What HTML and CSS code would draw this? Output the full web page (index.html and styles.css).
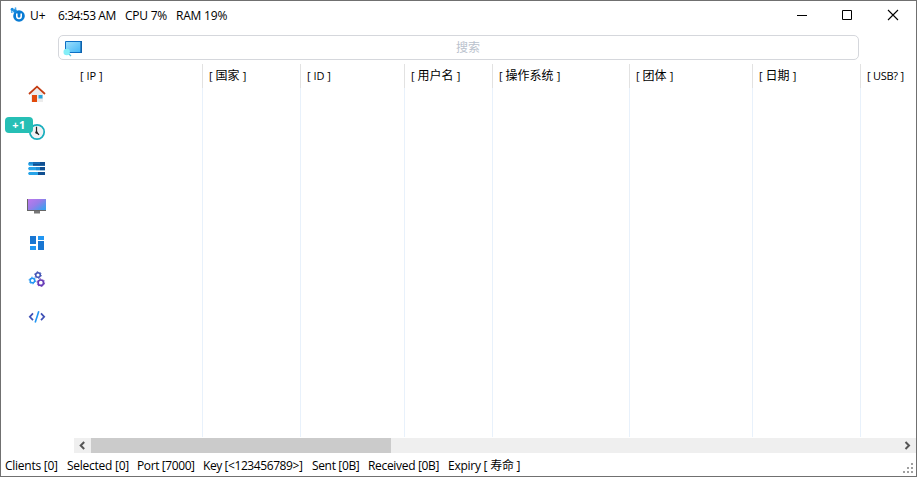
FILE: index.html
```html
<!DOCTYPE html>
<html lang="zh">
<head>
<meta charset="utf-8">
<title>U+</title>
<link rel="stylesheet" href="styles.css">
</head>
<body>
<div class="window">
  <header class="titlebar">
    <svg class="logo" width="16" height="16" viewBox="0 0 16 16"><circle cx="9" cy="9" r="5.8" fill="#087bd4"/><circle cx="2.2" cy="2.4" r="1.6" fill="#168be0"/><circle cx="5" cy="4" r="2" fill="#168be0"/><circle cx="1.8" cy="5" r="1" fill="#48a8ee"/><circle cx="5.5" cy="1.2" r=".9" fill="#48a8ee"/><path d="M6.8 6.5v2.7c0 3 4.4 3 4.4 0V6.5" fill="none" stroke="#fff" stroke-width="1.6"/></svg>
    <div class="stats"><span class="w-u">U+</span><span class="w-time">6:34:53 AM</span><span class="w-cpu">CPU 7%</span><span class="w-ram">RAM 19%</span></div>
    <div class="controls">
      <svg width="12" height="12" viewBox="0 0 12 12"><path d="M2 6.5h10" stroke="#000"/></svg>
      <svg width="12" height="12" viewBox="0 0 12 12"><path d="M1.5 1.5h9v9h-9z" fill="none" stroke="#000"/></svg>
      <svg width="12" height="12" viewBox="0 0 12 12"><path d="M1 1l10 10M11 1L1 11" stroke="#000" stroke-width="1.1"/></svg>
    </div>
  </header>
  <div class="search">
    <svg width="20" height="18" viewBox="0 0 20 18"><defs><linearGradient id="sky" x1="0" y1="0" x2="1" y2="1"><stop stop-color="#a0e0fc"/><stop offset="1" stop-color="#41b5f6"/></linearGradient></defs><path d="M2.5 2.5h16v11h-16z" fill="url(#sky)" stroke="#0d6fc4"/><path d="M18.2 2v12" stroke="#0d62ad" stroke-width="1.6"/><path d="M5 14l3 3" stroke="#55c3df" stroke-width="1.2"/><circle cx="3.7" cy="13" r="3.2" fill="#83eef7"/></svg>
    <span class="placeholder">搜索</span>
  </div>
  <main class="main">
    <nav class="sidebar">
      <div class="item"><svg width="20" height="20" viewBox="0 0 20 20"><path d="M4 9.5L10 4l6 5.5V18H4z" fill="#ececec"/><path d="M5 11h5v7H5z" fill="#e14a0c"/><path d="M11.5 11h4v3.5h-4z" fill="#28a5dc"/><path d="M2 10l8-7.3 8 7.3" fill="none" stroke="#c43c12" stroke-width="1.8"/></svg></div>
      <div class="item"><svg width="20" height="20" viewBox="0 0 20 20"><circle cx="10" cy="10" r="7.2" fill="#f2f2f4" stroke="#18aebd" stroke-width="1.7"/><path d="M9.5 4.8v5.7l2.5 2.3" fill="none" stroke="#222" stroke-width="1.2"/><circle cx="9.5" cy="10.5" r="1.2" fill="#222"/></svg><span class="badge">+1</span></div>
      <div class="item"><svg width="20" height="20" viewBox="0 0 20 20"><path d="M2 3h16v3.7H2l-1-1.7zM2 8h16v3.2H2l-1-1.6zM2 13h16v3H2l-1-1.5z" fill="#28a4e8"/><path d="M6 3h12v3.7H6zM13 8h5v3.2h-5zM11 13h7v3h-7z" fill="#104f91"/><path d="M2 3h11v2H2zM9 8h4v3.2H9z" fill="#1a7fc9" opacity=".6"/></svg></div>
      <div class="item"><svg width="20" height="20" viewBox="0 0 20 20"><defs><linearGradient id="screen" x1="0" y1="0" x2="1" y2=".8"><stop stop-color="#be78ed"/><stop offset=".5" stop-color="#987de9"/><stop offset="1" stop-color="#3ba0ee"/></linearGradient></defs><path d="M0 3h19v12H0z" fill="#666"/><path d="M1 3h18v11H1z" fill="url(#screen)"/><path d="M7 15h6v2H7z" fill="#777"/><path d="M7 17h6v1H7z" fill="#bbb"/></svg></div>
      <div class="item"><svg width="20" height="20" viewBox="0 0 20 20"><path d="M3 3h6v8H3zM11 8h6v9h-6z" fill="#1976d2"/><path d="M3 13h6v4H3zM11 3h6v4h-6z" fill="#2196f3"/></svg></div>
      <div class="item"><svg width="20" height="20" viewBox="0 0 20 20" fill="none"><g stroke="#3f51b5"><circle cx="11" cy="5" r="2.3" stroke-width="1.5"/><circle cx="11" cy="5" r="3.3" stroke-width="1" stroke-dasharray="1.5 1.955"/></g><g stroke="#2196f3"><circle cx="5.4" cy="10.5" r="2.3" stroke-width="1.5"/><circle cx="5.4" cy="10.5" r="3.3" stroke-width="1" stroke-dasharray="1.5 1.955"/></g><g stroke="#673ab7"><circle cx="13.8" cy="12.7" r="2.7" stroke-width="1.7"/><circle cx="13.8" cy="12.7" r="3.8" stroke-width="1" stroke-dasharray="1.8 2.18"/></g></svg></div>
      <div class="item"><svg width="20" height="20" viewBox="0 0 20 20" fill="none"><path d="M6 6.4L2.8 9.8 6 13.2M14 6.4l3.2 3.4-3.2 3.4" stroke="#3f51b5" stroke-width="1.7"/><path d="M11.8 4.2L8.2 15.5" stroke="#2196f3" stroke-width="1.6"/></svg></div>
    </nav>
    <section class="table">
      <div class="columns">
        <div class="col"><div class="head"><span class="h-ip">[ IP ]</span></div></div>
        <div class="col"><div class="head">[<b>国家</b>]</div></div>
        <div class="col"><div class="head"><span class="h-id">[ ID ]</span></div></div>
        <div class="col"><div class="head">[<b>用户名</b>]</div></div>
        <div class="col"><div class="head">[<b>操作系统</b>]</div></div>
        <div class="col"><div class="head">[<b>团体</b>]</div></div>
        <div class="col"><div class="head">[<b>日期</b>]</div></div>
        <div class="col"><div class="head"><span class="h-usb">[ USB? ]</span></div></div>
      </div>
      <div class="scrollbar">
        <svg width="17" height="15" viewBox="0 0 17 15"><path d="M10.2 4L6.7 7.5l3.5 3.5" fill="none" stroke="#555" stroke-width="2"/></svg>
        <div class="thumb"></div>
        <svg class="next" width="17" height="15" viewBox="0 0 17 15"><path d="M6.5 4L10 7.5 6.5 11" fill="none" stroke="#555" stroke-width="2"/></svg>
      </div>
    </section>
  </main>
  <footer class="status">
    <span class="s1">Clients [0]</span><span class="s2">Selected [0]</span><span class="s3">Port [7000]</span><span class="s4">Key [&lt;123456789&gt;]</span><span class="s5">Sent [0B]</span><span class="s6">Received [0B]</span><span class="s7">Expiry [ 寿命 ]</span>
    <svg class="grip" width="10" height="10" viewBox="0 0 10 10"><path d="M8 0h2v2H8zM4 4h2v2H4zM8 4h2v2H8zM0 8h2v2H0zM4 8h2v2H4zM8 8h2v2H8z" fill="#a0a0a0"/></svg>
  </footer>
</div>
</body>
</html>
```
FILE: styles.css
```css
* { box-sizing: border-box; }
body { margin: 0; font: 12px/16px "Open Sans", "Noto Sans CJK SC", sans-serif; color: #000; }
.window { width: 917px; height: 477px; display: flex; flex-direction: column; border: 1px solid #707070; background: #fff; }
svg { display: block; flex: none; }
span { white-space: nowrap; }

.titlebar { height: 34px; flex: none; display: flex; align-items: flex-start; padding: 6px 17px 0 9px; }
.stats { display: flex; margin: 1px 0 0 4px; }
.w-u { width: 28px; }
.w-time { width: 67px; letter-spacing: -.42px; }
.w-cpu { width: 51px; letter-spacing: -.25px; }
.w-ram { letter-spacing: -.2px; }
.controls { display: flex; gap: 34px; margin: 2px 0 0 auto; }

.search { width: 801px; height: 25px; flex: none; margin-left: 57px; display: flex; align-items: center; padding-left: 4px; border: 1px solid #d5d7dc; border-radius: 5px; }
.placeholder { flex: 1; text-align: center; margin-right: 5px; color: #bac2cd; }

.main { height: 394px; flex: none; display: flex; padding-top: 4px; }
.sidebar { width: 73px; padding-top: 12px; flex: none; }
.item { height: 37px; display: flex; align-items: center; padding-left: 26px; position: relative; }
.item:first-child svg { margin-top: -1px; }
.badge { position: absolute; left: 4px; top: 4px; width: 28px; height: 16px; border-radius: 4px; background: #26bfb5; color: #fff; font: bold 11px/16px "Open Sans", sans-serif; text-align: center; letter-spacing: .5px; }

.table { width: 842px; }
.columns { height: 373px; display: grid; grid-template-columns: 129px 98px 104px 88px 137px 123px 108px 55px; }
.col { border-right: 1px solid #e8f1fb; }
.col:last-child { border-right: 0; }
.head { height: 24px; margin-right: -1px; border-right: 1px solid #e2e2e2; padding-left: 6px; display: flex; align-items: center; white-space: nowrap; font-size: 11px; }
.col:last-child .head { border-right: 0; margin-right: 0; }
.head b { font-weight: 400; font-size: 12px; margin: 0 3px; }
.h-ip, .h-id { letter-spacing: 0; }
.h-usb { letter-spacing: -.25px; }

.scrollbar { height: 15px; margin-top: 1px; display: flex; background: #efefef; }
.thumb { width: 300px; background: #cbcbcb; }
.next { margin-left: auto; }

.status { flex: 1; display: flex; padding: 0 3px 0 4px; letter-spacing: -.25px; }
.status span { line-height: 23px; }
.s1 { width: 62px; } .s2 { width: 70px; } .s3 { width: 66px; letter-spacing: -.4px; } .s4 { width: 109px; letter-spacing: -.42px; } .s5 { width: 56px; letter-spacing: -.35px; } .s6 { width: 80px; letter-spacing: -.32px; }
.grip { margin: 9px 0 0 auto; }
```
